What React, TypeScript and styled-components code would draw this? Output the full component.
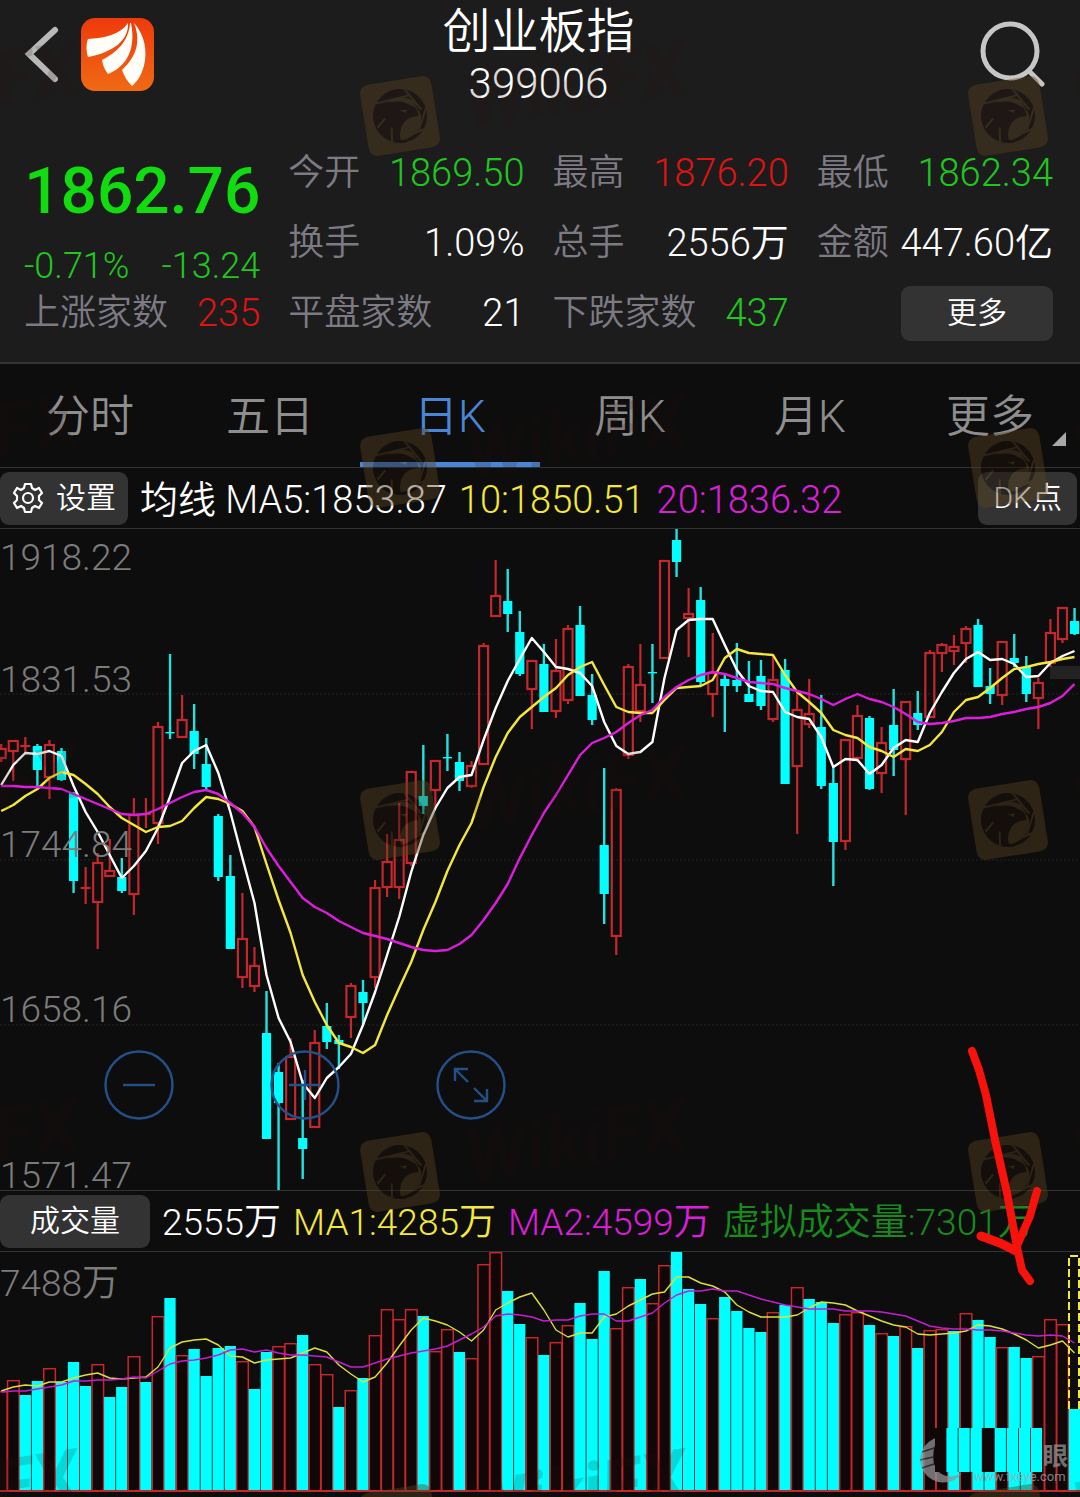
import React, { useState } from "react";
import styled, { createGlobalStyle } from "styled-components";

const color = {
  header: "#1c1c1c",
  page: "#0d0d0d",
  line: "#333333",
  button: "#333333",
  label: "#7d7a84",
  muted: "#8e8e8e",
  axis: "#7c7c7c",
  white: "#ffffff",
  green: "#1fc71f",
  price: "#10dc10",
  red: "#dc1414",
  blue: "#4a86d8",
  yellow: "#f4e83c",
  magenta: "#dc1edc",
  virtual: "#178c1c",
  up: "#c4272c",
  down: "#00ffff",
};

const GlobalStyle = createGlobalStyle`
  * { box-sizing: border-box; }
  body {
    margin: 0;
    background: ${color.page};
    font-family: Roboto, "Noto Sans CJK SC", sans-serif;
    font-weight: 350;
    color: ${color.white};
  }
  button, a { font: inherit; color: inherit; }
`;

const Page = styled.main`
  position: relative;
  overflow: hidden;
  background: ${color.page};
`;

const Header = styled.header`
  background: ${color.header};
  border-bottom: 2px solid ${color.line};
  padding: 0 27px 14px 24px;
`;

const TopBar = styled.div`
  display: grid;
  grid-template-columns: 1fr auto 1fr;
  align-items: center;
`;

const TopLeft = styled.div`
  display: flex;
  align-items: center;
  gap: 20px;
`;

const TopRight = styled.div`
  display: flex;
  justify-content: flex-end;
  padding-right: 6px;
`;

const IconButton = styled.button`
  display: flex;
  padding: 0;
  border: 0;
  background: none;
  cursor: pointer;
`;

const Heading = styled.div`
  padding-top: 4px;
  text-align: center;
`;

const Title = styled.h1`
  margin: 0;
  font-size: 48px;
  font-weight: 350;
  line-height: 56px;
`;

const Code = styled.p`
  margin: 0;
  font-size: 42px;
  line-height: 48px;
`;

const Quote = styled.section`
  display: grid;
  grid-template-columns: repeat(4, minmax(0, 1fr));
  grid-auto-rows: 70px;
  column-gap: 28px;
  align-items: center;
  margin-top: 30px;
`;

const Summary = styled.div`
  grid-row: 1 / span 3;
  align-self: start;
  padding-top: 20px;
`;

const Price = styled.div`
  font-size: 64px;
  font-weight: 500;
  line-height: 68px;
  text-align: right;
  color: ${color.price};
`;

const Change = styled.div`
  display: flex;
  justify-content: space-between;
  margin-top: 20px;
  font-size: 36px;
  line-height: 40px;
  color: ${color.green};
`;

const Stat = styled.dl`
  display: flex;
  justify-content: space-between;
  align-items: center;
  margin: 0;
  line-height: 54px;
  white-space: nowrap;
`;

const StatName = styled.dt`
  font-size: 36px;
  color: ${color.label};
`;

const StatValue = styled.dd<{ $tone: string }>`
  margin: 0;
  font-size: 38px;
  color: ${(p) => p.$tone};
`;

const SmallButton = styled.button<{ $pad: number; $height: number }>`
  display: flex;
  align-items: center;
  justify-content: center;
  gap: 12px;
  height: ${(p) => p.$height}px;
  padding: 0 ${(p) => p.$pad}px;
  border: 0;
  border-radius: 9px;
  background: ${color.button};
  color: ${color.white};
  font-size: 30px;
  line-height: 40px;
  white-space: nowrap;
  cursor: pointer;
`;

const MoreCell = styled.div`
  display: flex;
  justify-content: flex-end;
`;

const Tabs = styled.nav`
  display: grid;
  grid-template-columns: repeat(6, 1fr);
  border-bottom: 1px solid ${color.line};
`;

const Tab = styled.button<{ $active: boolean }>`
  position: relative;
  height: 103px;
  padding: 8px 0 0;
  border: 0;
  border-bottom: 5px solid ${(p) => (p.$active ? color.blue : "transparent")};
  background: none;
  font-size: 44px;
  line-height: 60px;
  color: ${(p) => (p.$active ? color.blue : color.muted)};
  cursor: pointer;
`;

const Corner = styled.span`
  position: absolute;
  right: 14px;
  bottom: 16px;
  border-style: solid;
  border-width: 0 0 14px 14px;
  border-color: transparent transparent #a8a8a8 transparent;
`;

const Toolbar = styled.div`
  display: flex;
  align-items: center;
  gap: 12px;
  height: 61px;
  padding-right: 3px;
  border-bottom: 1px solid ${color.line};
  white-space: nowrap;
`;

const Legend = styled.span<{ $tone: string; $size: number }>`
  padding-top: 4px;
  font-size: ${(p) => p.$size}px;
  line-height: 52px;
  color: ${(p) => p.$tone};
`;

const Spacer = styled.span`
  flex: 1;
`;

const Chart = styled.section`
  position: relative;
  border-bottom: 1px solid ${color.line};
`;

const VolumeChart = styled(Chart)`
  border-bottom: 0;
  padding-bottom: 5px;
`;

const Drawing = styled.svg`
  display: block;
  width: 100%;
  height: auto;
`;

const AxisLabel = styled.span<{ $at: number }>`
  position: absolute;
  left: 0;
  top: ${(p) => p.$at}%;
  font-size: 37px;
  line-height: 44px;
  color: ${color.axis};
`;

const ChartControls = styled.div`
  position: absolute;
  left: 104px;
  bottom: 70px;
  display: flex;
  gap: 96px;
`;

const Overlay = styled.svg`
  position: absolute;
  left: 0;
  top: 0;
  width: 100%;
  height: auto;
  pointer-events: none;
`;

type Candle = [kind: "r" | "c", high: number, top: number, bottom: number, low: number];

const candles: Candle[] = [
  ["r", 744, 749, 758, 762], ["r", 740, 741, 751, 781], ["r", 737, 746, 746, 753], ["c", 744, 746, 770, 786],
  ["r", 740, 745, 777, 799], ["c", 748, 751, 780, 781], ["c", 792, 793, 881, 893], ["r", 867, 888, 888, 904],
  ["r", 853, 863, 902, 949], ["r", 839, 871, 876, 876], ["c", 858, 877, 891, 893], ["r", 798, 815, 894, 915],
  ["r", 798, 814, 814, 828], ["r", 722, 727, 823, 844], ["c", 654, 732, 732, 739], ["r", 695, 720, 737, 737],
  ["c", 704, 731, 754, 769], ["c", 738, 764, 787, 790], ["c", 814, 816, 877, 881], ["c", 855, 876, 949, 949],
  ["r", 893, 939, 977, 988], ["r", 947, 966, 986, 992], ["c", 991, 1033, 1139, 1139], ["c", 1063, 1072, 1103, 1190],
  ["r", 1038, 1057, 1119, 1119], ["c", 1080, 1138, 1149, 1179], ["r", 1030, 1043, 1127, 1127], ["c", 1003, 1026, 1042, 1049],
  ["c", 1035, 1040, 1044, 1069], ["r", 983, 986, 1017, 1038], ["c", 980, 992, 1003, 1024], ["r", 880, 888, 977, 988],
  ["r", 834, 862, 887, 897], ["r", 803, 840, 887, 899], ["r", 771, 772, 863, 866], ["c", 745, 796, 806, 814],
  ["r", 760, 761, 790, 807], ["c", 734, 757, 757, 771], ["c", 752, 762, 781, 791], ["r", 761, 766, 786, 788],
  ["r", 643, 646, 764, 764], ["r", 560, 596, 616, 616], ["c", 569, 601, 614, 632], ["c", 611, 632, 674, 676],
  ["r", 660, 661, 689, 729], ["c", 644, 664, 712, 712], ["r", 639, 671, 711, 718], ["r", 625, 629, 700, 704],
  ["c", 606, 625, 696, 696], ["c", 674, 695, 720, 725], ["c", 768, 845, 894, 924], ["r", 788, 790, 936, 955],
  ["r", 664, 667, 755, 759], ["r", 644, 685, 711, 722], ["c", 644, 672, 672, 703], ["r", 560, 561, 658, 658],
  ["c", 528, 540, 562, 577], ["r", 588, 614, 618, 657], ["c", 587, 600, 682, 685], ["r", 633, 673, 694, 717],
  ["c", 675, 679, 686, 732], ["c", 643, 680, 686, 692], ["c", 661, 694, 702, 702], ["c", 660, 676, 706, 710],
  ["r", 655, 680, 719, 722], ["c", 659, 670, 784, 784], ["r", 690, 710, 766, 834], ["r", 679, 714, 724, 728],
  ["c", 695, 727, 786, 789], ["c", 767, 783, 842, 886], ["r", 739, 740, 841, 850], ["r", 705, 716, 758, 762],
  ["c", 716, 718, 789, 790], ["r", 727, 743, 773, 793], ["c", 689, 725, 750, 776], ["r", 701, 702, 759, 815],
  ["c", 691, 713, 725, 730], ["r", 650, 653, 717, 717], ["r", 643, 645, 653, 672], ["r", 635, 647, 651, 665],
  ["r", 626, 629, 643, 663], ["c", 619, 625, 687, 687], ["c", 668, 686, 694, 704], ["r", 641, 642, 695, 705],
  ["c", 634, 658, 663, 667], ["c", 656, 667, 694, 702], ["r", 678, 683, 698, 729], ["r", 619, 633, 663, 667],
  ["r", 607, 608, 639, 643], ["c", 608, 621, 634, 635],
];

const ma5 = [
  785, 765, 753, 754, 751, 756, 786, 812, 832, 855, 878, 866, 851, 828, 797, 763, 751, 745, 773, 812, 858, 903, 975, 1018,
  1042, 1083, 1098, 1078, 1067, 1054, 1025, 992, 955, 917, 872, 835, 808, 788, 777, 775, 740, 708, 681, 659, 638, 652, 667,
  669, 673, 686, 722, 746, 754, 752, 742, 678, 630, 620, 619, 619, 645, 670, 686, 691, 692, 712, 717, 719, 737, 767, 759,
  760, 774, 765, 748, 740, 742, 713, 692, 673, 659, 652, 660, 659, 664, 677, 676, 663, 656, 651,
];
const ma10 = [
  811, 805, 796, 789, 778, 772, 775, 784, 794, 807, 818, 825, 832, 827, 826, 821, 808, 797, 799, 804, 811, 827, 864, 900,
  933, 975, 1002, 1025, 1043, 1047, 1053, 1045, 1015, 988, 962, 930, 902, 871, 845, 823, 787, 757, 733, 717, 707, 697, 688,
  675, 667, 662, 685, 707, 712, 713, 713, 700, 688, 687, 686, 680, 658, 649, 653, 654, 655, 675, 692, 702, 713, 730, 735,
  738, 747, 751, 757, 749, 751, 745, 732, 712, 700, 697, 688, 678, 669, 667, 664, 662, 659, 657,
];
const ma20 = [
  786, 786, 787, 787, 788, 789, 794, 799, 804, 809, 814, 815, 814, 809, 803, 797, 792, 790, 794, 803, 813, 827, 848, 866,
  882, 898, 907, 913, 921, 927, 933, 936, 939, 943, 947, 950, 951, 950, 944, 935, 920, 903, 884, 858, 835, 813, 795, 775,
  755, 743, 738, 732, 723, 715, 710, 697, 687, 680, 675, 672, 674, 678, 682, 683, 684, 688, 691, 694, 699, 705, 699, 694,
  699, 702, 707, 714, 722, 724, 723, 721, 718, 718, 717, 714, 712, 709, 707, 703, 696, 684,
];

const volumeKinds =
  "rrccrcccrccrcrcrccccrccrrcrrcrcrrrrcrrcrrrccrcrrcccrrcrrcccrccccrcrcccrrcrcrcrrcrccrccrrrc";
const volumeTops = [
  1391, 1380, 1395, 1381, 1368, 1382, 1362, 1386, 1364, 1397, 1387, 1356, 1382, 1316, 1298, 1355, 1349, 1376, 1348, 1346,
  1361, 1389, 1352, 1346, 1343, 1335, 1364, 1374, 1407, 1390, 1378, 1335, 1309, 1319, 1309, 1316, 1351, 1329, 1352, 1358,
  1264, 1252, 1291, 1324, 1337, 1355, 1342, 1325, 1303, 1339, 1271, 1328, 1287, 1279, 1303, 1265, 1252, 1289, 1304, 1318,
  1297, 1311, 1328, 1332, 1312, 1305, 1287, 1299, 1302, 1323, 1314, 1312, 1325, 1333, 1336, 1326, 1348, 1330, 1329, 1331,
  1313, 1320, 1337, 1347, 1347, 1358, 1356, 1319, 1324, 1409,
];
const volumeMa1 = [
  1391, 1387, 1385, 1386, 1382, 1382, 1378, 1375, 1373, 1378, 1379, 1378, 1377, 1367, 1348, 1342, 1340, 1339, 1345, 1356,
  1357, 1363, 1360, 1359, 1358, 1353, 1348, 1352, 1365, 1374, 1382, 1377, 1363, 1346, 1330, 1318, 1321, 1325, 1332, 1341,
  1330, 1310, 1303, 1297, 1293, 1310, 1330, 1337, 1333, 1333, 1317, 1314, 1306, 1300, 1294, 1292, 1277, 1277, 1283, 1286,
  1292, 1305, 1312, 1317, 1317, 1317, 1315, 1308, 1302, 1303, 1305, 1311, 1316, 1321, 1325, 1327, 1334, 1335, 1334, 1333,
  1331, 1325, 1326, 1329, 1334, 1340, 1348, 1345, 1341, 1353,
];
const volumeMa2 = [
  1392, 1391, 1391, 1389, 1387, 1385, 1381, 1381, 1380, 1380, 1379, 1377, 1378, 1371, 1364, 1361, 1360, 1358, 1355, 1350,
  1349, 1352, 1350, 1353, 1355, 1355, 1356, 1357, 1362, 1367, 1367, 1363, 1359, 1356, 1353, 1351, 1349, 1346, 1340, 1334,
  1327, 1316, 1314, 1315, 1317, 1321, 1320, 1320, 1316, 1314, 1314, 1321, 1321, 1317, 1313, 1303, 1295, 1291, 1291, 1289,
  1291, 1291, 1295, 1299, 1302, 1305, 1307, 1309, 1309, 1309, 1311, 1311, 1311, 1312, 1314, 1316, 1321, 1326, 1328, 1329,
  1329, 1330, 1330, 1331, 1333, 1335, 1336, 1335, 1336, 1343,
];

const slotX = (i: number) => 1.2 + i * 12.06;
const toPoints = (ys: number[]) => ys.map((y, i) => `${slotX(i).toFixed(1)},${y}`).join(" ");

function PriceDrawing() {
  return (
    <Drawing viewBox="0 529 1080 661" role="img" aria-label="日K">
      {[694, 860, 1025].map((y) => (
        <line key={y} x1="0" x2="1080" y1={y} y2={y} stroke="#242424" strokeDasharray="2 2" />
      ))}
      <rect x="1050" y="666" width="30" height="13" fill="#222222" />
      {candles.map(([kind, high, top, bottom, low], i) => {
        const x = slotX(i);
        if (kind === "c") {
          const flat = bottom - top < 2;
          return (
            <g key={i}>
              <line x1={x} x2={x} y1={high} y2={low} stroke="#22e2e0" strokeWidth="2.4" />
              <rect x={x - 4.6} y={top} width="9.2" height={flat ? 1.4 : bottom - top} fill={color.down} />
            </g>
          );
        }
        return (
          <g key={i} stroke={color.up} strokeWidth="2.2" fill="none">
            <line x1={x} x2={x} y1={high} y2={top} />
            <line x1={x} x2={x} y1={bottom} y2={low} />
            {bottom - top < 2 ? (
              <line x1={x - 5} x2={x + 5} y1={top} y2={top} />
            ) : (
              <rect x={x - 4.5} y={top} width="9" height={bottom - top} />
            )}
          </g>
        );
      })}
      <g fill="none" strokeWidth="2.4" strokeLinejoin="round">
        <polyline points={toPoints(ma5)} stroke={color.white} />
        <polyline points={toPoints(ma10)} stroke={color.yellow} />
        <polyline points={toPoints(ma20)} stroke={color.magenta} />
      </g>
    </Drawing>
  );
}

function VolumeDrawing() {
  return (
    <Drawing viewBox="0 1252 1080 240" role="img" aria-label="成交量">
      {volumeTops.map((top, i) => {
        const x = slotX(i);
        return volumeKinds[i] === "c" ? (
          <rect key={i} x={x - 5.7} y={top} width="11.3" height={1491 - top} fill={color.down} />
        ) : (
          <rect key={i} x={x - 5.7} y={top + 0.7} width="11.6" height={1491 - top} fill="#100708" stroke={color.up} strokeWidth="1.5" />
        );
      })}
      <path d="M1069 1409V1256H1080" fill="none" stroke={color.yellow} strokeWidth="2" strokeDasharray="8 3" />
      <path d="M1079 1409V1256" fill="none" stroke={color.yellow} strokeWidth="2" strokeDasharray="8 3" />
      <line x1="0" x2="1080" y1="1491" y2="1491" stroke={color.up} strokeWidth="2" />
      <g fill="none" strokeWidth="1.4" strokeLinejoin="round">
        <polyline points={toPoints(volumeMa1)} stroke="#dde03c" />
        <polyline points={toPoints(volumeMa2)} stroke="#c41ed2" />
      </g>
    </Drawing>
  );
}

function BrandLogo() {
  return (
    <svg width="73" height="73" viewBox="0 0 73 73" role="img" aria-label="东方财富">
      <defs>
        <linearGradient id="brand" x1="0" y1="0" x2="0" y2="1">
          <stop offset="0" stopColor="#ee3a0c" />
          <stop offset="1" stopColor="#f06a14" />
        </linearGradient>
      </defs>
      <rect width="73" height="73" rx="14" fill="url(#brand)" />
      <g fill="#fffdf8">
        <path d="M7 21C21 20 38 18 47 5C48 21 34 34 7 39C5 33 5 26 7 21Z" />
        <path d="M49 5C48 22 37 34 21 42C22 48 24 52 27 56C42 50 56 35 50 5Z" />
        <path d="M53 5C60 23 56 38 41 52C43 58 46 63 51 68C66 56 71 25 53 5Z" />
      </g>
    </svg>
  );
}

function GearIcon() {
  return (
    <svg width="32" height="32" viewBox="0 0 32 32" fill="none" stroke="#fff" strokeWidth="2.2" strokeLinejoin="round" aria-hidden="true">
      <path d="M13 2H19L20 6L23 8L27 6L30 11L27 14V18L30 21L27 26L23 24L20 26L19 30H13L12 26L9 24L5 26L2 21L5 18V14L2 11L5 6L9 8L12 6Z" />
      <circle cx="16" cy="16" r="5" />
    </svg>
  );
}

function RoundIcon({ d }: { d: string }) {
  return (
    <svg width="70" height="70" viewBox="0 0 70 70" fill="none" stroke="#24508a" strokeWidth="2.4" aria-hidden="true">
      <circle cx="35" cy="35" r="33.5" />
      <path d={d} />
    </svg>
  );
}

function Watermark({ x, y }: { x: number; y: number }) {
  return (
    <g transform={`translate(${x} ${y}) rotate(-9)`}>
      <g opacity="0.42">
        <rect x="-36" y="-36" width="72" height="72" rx="9" fill="#5a4420" />
        <circle r="27" fill="#21120c" />
        <path d="M18 3C8 1 -4 8 -3 24C9 25 20 16 21 2L15 -13C8 -19 -2 -20 -10 -15C0 -16 8 -13 12 -9C17 -7 19 -3 18 3Z" fill="#5a4420" />
        <path d="M-22 -16L12 -19M8 -27L22 -3M27 -4L16 18M24 16L-2 23M-12 25L-10 10M-24 8L-15 0" stroke="#5a4420" strokeWidth="2" />
        <path d="M0 -6L8 -5L6 -2Z" fill="#5a4420" />
      </g>
      <text x="66" y="22" fontSize="74" fontWeight="700" fontStyle="italic" fill="#2a130c" opacity="0.16">
        WikiFX
      </text>
    </g>
  );
}

const markPlaces = [116, 468, 820, 1172, 1524].flatMap((y) => [-208, 400, 1008].map((x) => ({ x, y })));

function Annotations() {
  return (
    <Overlay viewBox="0 0 1080 1497" aria-hidden="true">
      {markPlaces.map((p) => (
        <Watermark key={`${p.x}-${p.y}`} x={p.x} y={p.y} />
      ))}
      <g fill="none" stroke="#f8120c" strokeLinecap="round" strokeLinejoin="round">
        <path strokeWidth="8" d="M972 1051L979 1070L986 1095L995 1140L1007 1193L1017 1247L1022 1270L1030 1281" />
        <path strokeWidth="8" d="M1037 1191L1030 1216L1017 1246" />
        <path strokeWidth="9" d="M981 1236L1000 1243L1016 1251" />
      </g>
      <g opacity="0.75">
        <path d="M939 1437A23 23 0 1 0 962 1473C950 1480 938 1476 934 1464C932 1454 934 1444 939 1437Z" fill="#8e9496" />
        <path d="M922 1452L934 1448M920 1460L933 1457M922 1468L934 1464" stroke="#33383a" strokeWidth="1.5" />
        <text x="1043" y="1465" fontSize="25" fontWeight="700" fill="#8e9496">眼</text>
        <text x="974" y="1481" fontSize="13" fontWeight="400" fill="#a2aaac">www.fxeye.com</text>
      </g>
      <rect x="935" y="1428" width="107" height="44" fill="#100708" />
      {[0, 1, 2, 4, 5, 6, 7].map((k) => (
        <rect key={k} x={946.4 + k * 12.06} y="1428" width="11.3" height="44" fill={color.down} />
      ))}
    </Overlay>
  );
}

const stats = [
  { name: "今开", value: "1869.50", tone: color.green },
  { name: "最高", value: "1876.20", tone: color.red },
  { name: "最低", value: "1862.34", tone: color.green },
  { name: "换手", value: "1.09%", tone: color.white },
  { name: "总手", value: "2556万", tone: color.white },
  { name: "金额", value: "447.60亿", tone: color.white },
  { name: "平盘家数", value: "21", tone: color.white },
  { name: "下跌家数", value: "437", tone: color.green },
];

const tabs = ["分时", "五日", "日K", "周K", "月K", "更多"];

const axis = [
  { text: "1918.22", at: 1 },
  { text: "1831.53", at: 19.5 },
  { text: "1744.84", at: 44.5 },
  { text: "1658.16", at: 69.5 },
  { text: "1571.47", at: 94.5 },
];

export default function App() {
  const [active, setActive] = useState("日K");
  return (
    <Page>
      <GlobalStyle />
      <Header>
        <TopBar>
          <TopLeft>
            <IconButton aria-label="返回">
              <svg width="37" height="60" viewBox="0 0 37 60" fill="none" stroke="#b8b8b8" strokeWidth="6" strokeLinecap="round">
                <path d="M31 6L5 30L31 55" />
              </svg>
            </IconButton>
            <BrandLogo />
          </TopLeft>
          <Heading>
            <Title>创业板指</Title>
            <Code>399006</Code>
          </Heading>
          <TopRight>
            <IconButton aria-label="搜索">
              <svg width="68" height="66" viewBox="0 0 68 66" fill="none" stroke="#c6c6c6" strokeWidth="5" strokeLinecap="round">
                <circle cx="31" cy="30" r="27" />
                <path d="M50 50L63 63" />
              </svg>
            </IconButton>
          </TopRight>
        </TopBar>
        <Quote>
          <Summary>
            <Price>1862.76</Price>
            <Change>
              <span>-0.71%</span>
              <span>-13.24</span>
            </Change>
            <Stat>
              <StatName>上涨家数</StatName>
              <StatValue $tone={color.red}>235</StatValue>
            </Stat>
          </Summary>
          {stats.map((s) => (
            <Stat key={s.name}>
              <StatName>{s.name}</StatName>
              <StatValue $tone={s.tone}>{s.value}</StatValue>
            </Stat>
          ))}
          <MoreCell>
            <SmallButton $pad={46} $height={55}>更多</SmallButton>
          </MoreCell>
        </Quote>
      </Header>
      <Tabs>
        {tabs.map((t) => (
          <Tab key={t} $active={t === active} onClick={() => setActive(t)}>
            {t}
            {t === "更多" && <Corner />}
          </Tab>
        ))}
      </Tabs>
      <Toolbar>
        <SmallButton $pad={12} $height={53}>
          <GearIcon />
          设置
        </SmallButton>
        <Legend $size={38} $tone={color.white}>均线 MA5:1853.87</Legend>
        <Legend $size={38} $tone={color.yellow}>10:1850.51</Legend>
        <Legend $size={38} $tone={color.magenta}>20:1836.32</Legend>
        <Spacer />
        <SmallButton $pad={15} $height={53}>DK点</SmallButton>
      </Toolbar>
      <Chart>
        <PriceDrawing />
        {axis.map((a) => (
          <AxisLabel key={a.text} $at={a.at}>{a.text}</AxisLabel>
        ))}
        <ChartControls>
          <IconButton aria-label="缩小"><RoundIcon d="M19 35H51" /></IconButton>
          <IconButton aria-label="放大"><RoundIcon d="M19 35H51M35 20V50" /></IconButton>
          <IconButton aria-label="全屏"><RoundIcon d="M32 32L19 19M19 31V19H32M38 38L51 51M51 39V51H38" /></IconButton>
        </ChartControls>
      </Chart>
      <Toolbar>
        <SmallButton $pad={30} $height={53}>成交量</SmallButton>
        <Legend $size={37} $tone={color.white}>2555万</Legend>
        <Legend $size={37} $tone={color.yellow}>MA1:4285万</Legend>
        <Legend $size={37} $tone={color.magenta}>MA2:4599万</Legend>
        <Legend $size={37} $tone={color.virtual}>虚拟成交量:7301万</Legend>
      </Toolbar>
      <VolumeChart>
        <VolumeDrawing />
        <AxisLabel $at={4}>7488万</AxisLabel>
      </VolumeChart>
      <Annotations />
    </Page>
  );
}
